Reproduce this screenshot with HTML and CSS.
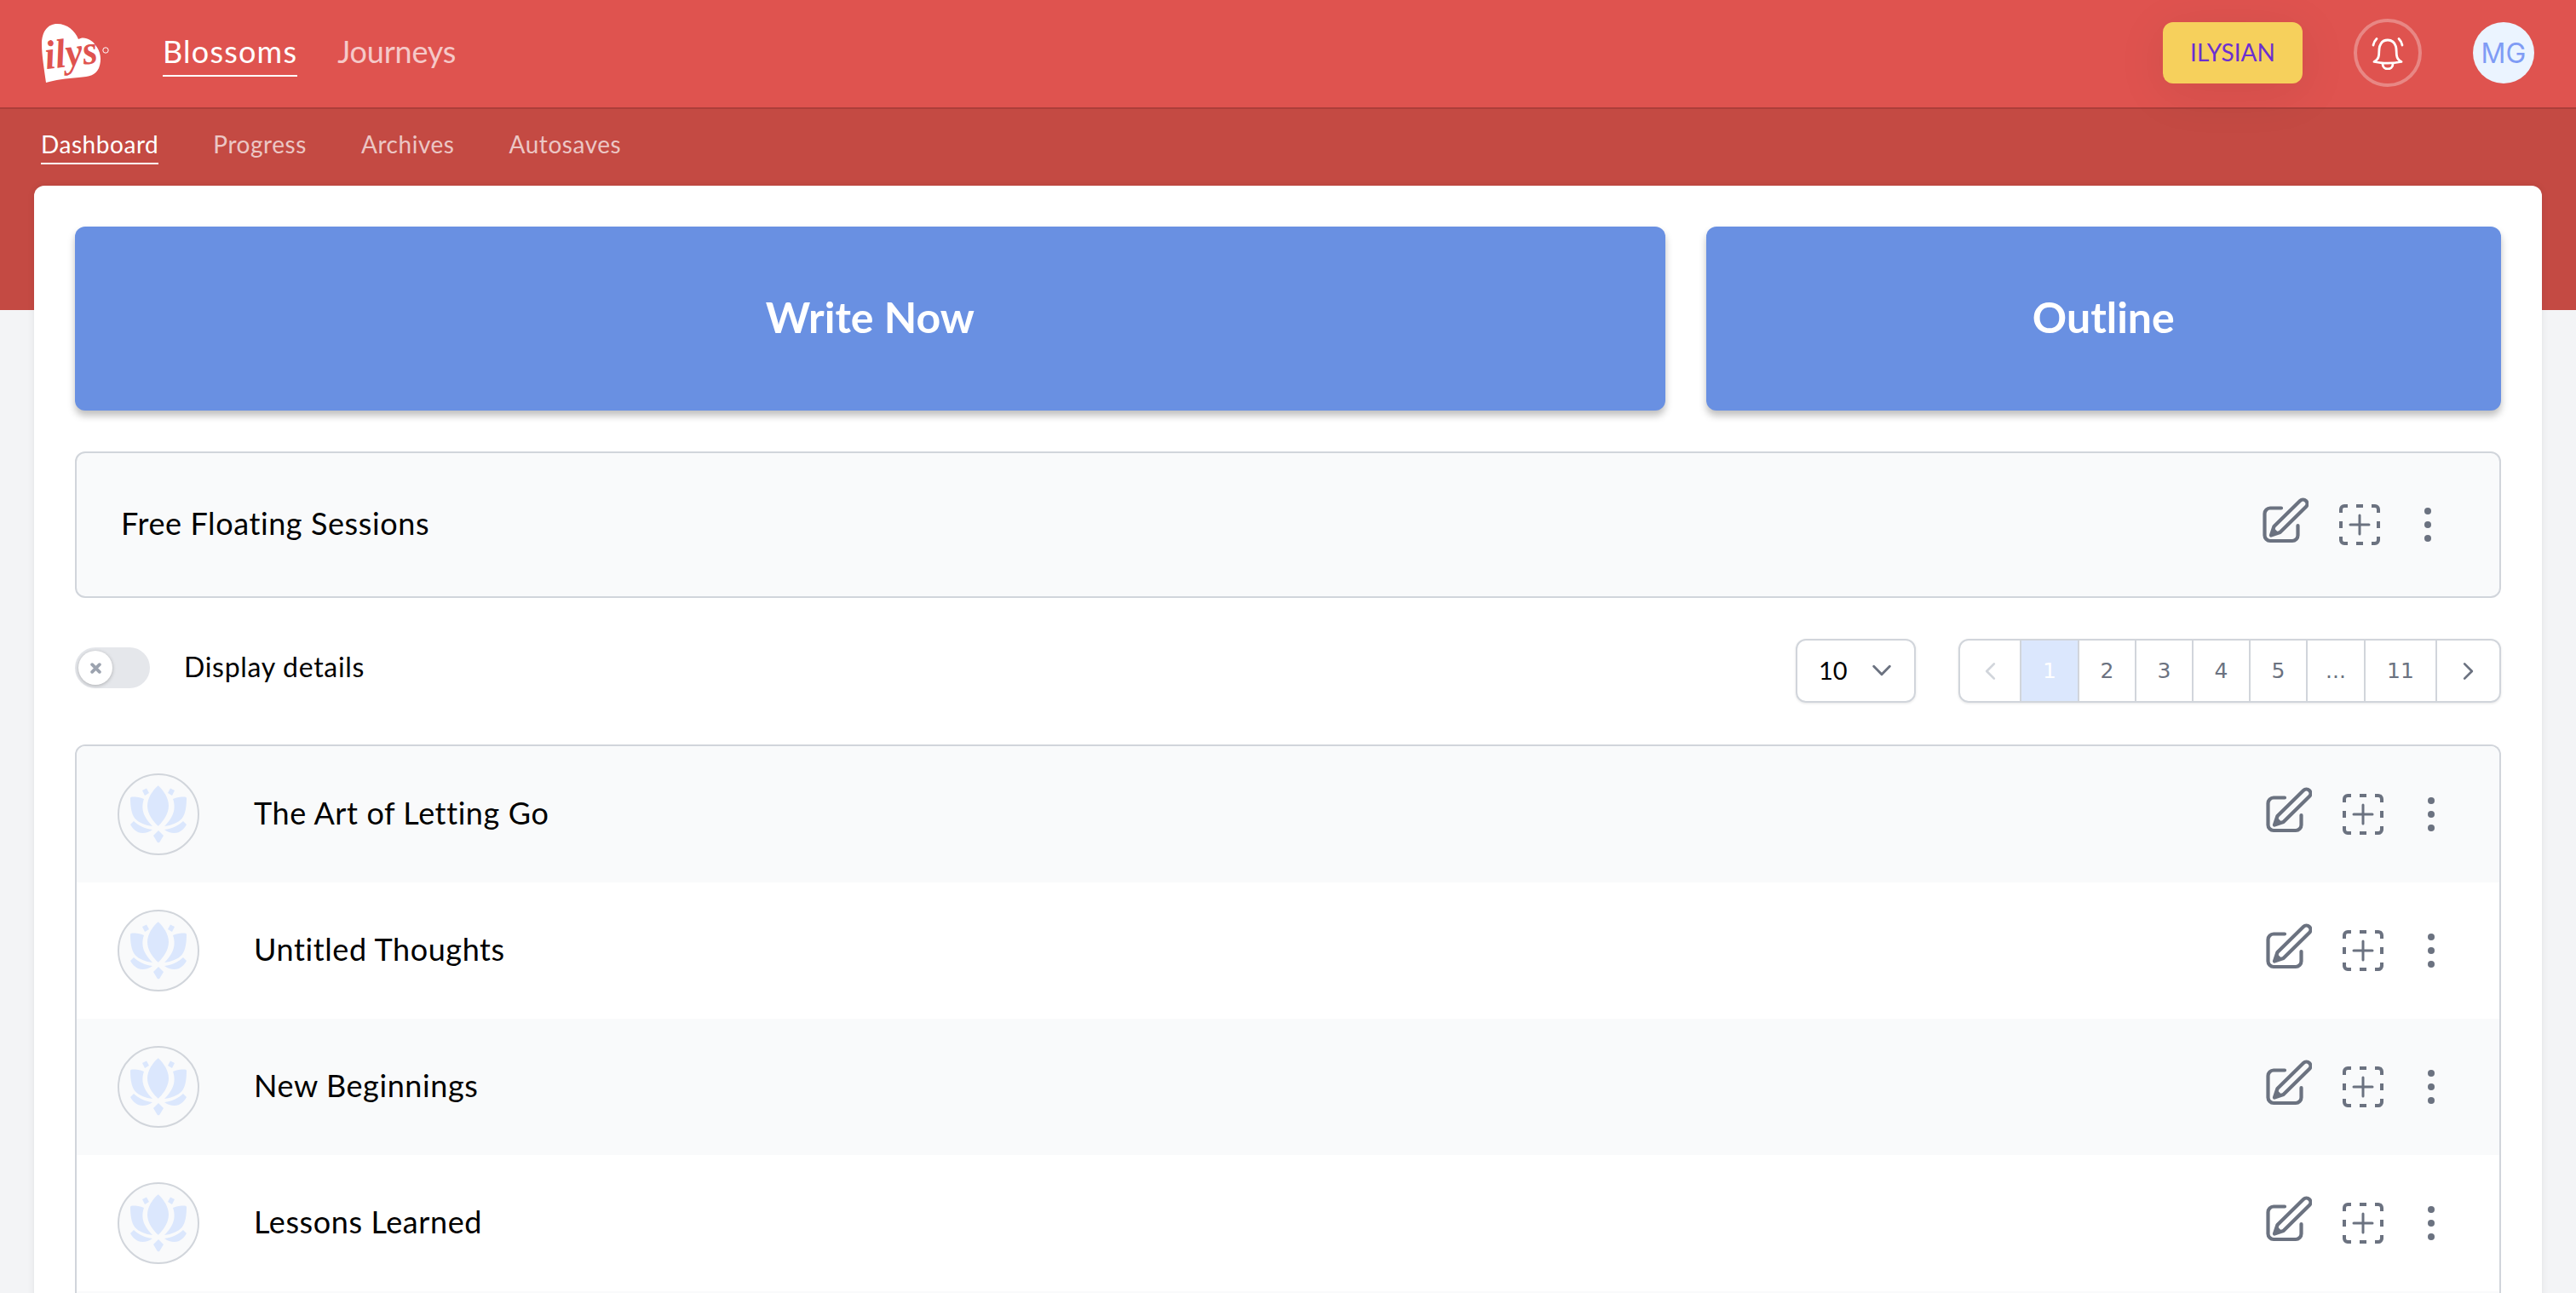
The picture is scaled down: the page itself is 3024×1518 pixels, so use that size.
FILE: index.html
```html
<!DOCTYPE html>
<html lang="en">
<head>
    <meta charset="UTF-8">
    <meta name="viewport" content="width=device-width, initial-scale=1.0">
    <title>Dashboard</title>
    <link rel="stylesheet" href="styles.css">
</head>
<body>
    <svg class="defs" width="0" height="0">
        <symbol id="i-edit" viewBox="0 0 54 56">
            <path d="M22 13.5H9A6.5 6.5 0 0 0 2.500 20V45.500A6.500 6.500 0 0 0 9 52H35A6.500 6.500 0 0 0 41.500 45.500V34" fill="none" stroke="currentColor" stroke-width="4.200" stroke-linecap="round"/>
            <path d="M10 45.500L13.500 35L44 5A4.900 4.900 0 0 1 51 12L20.500 42Z" fill="none" stroke="currentColor" stroke-width="4.200" stroke-linejoin="round"/>
            <path d="M10 45.500L13 36.500L19 42.500Z" fill="currentColor"/>
        </symbol>
        <symbol id="i-add" viewBox="0 0 48 48">
            <path d="M2 10V6A4 4 0 0 1 6 2H10M20 2H28M38 2H42A4 4 0 0 1 46 6V10M46 20V28M46 38V42A4 4 0 0 1 42 46H38M28 46H20M10 46H6A4 4 0 0 1 2 42V38M2 28V20" fill="none" stroke="currentColor" stroke-width="4" stroke-linecap="butt"/>
            <path d="M24 13V35M13 24H35" fill="none" stroke="currentColor" stroke-width="3" stroke-linecap="round"/>
        </symbol>
        <symbol id="i-dots" viewBox="0 0 8 40">
            <circle cx="4" cy="4" r="4" fill="currentColor"/>
            <circle cx="4" cy="20" r="4" fill="currentColor"/>
            <circle cx="4" cy="36" r="4" fill="currentColor"/>
        </symbol>
        <symbol id="i-lotus" viewBox="0 0 96 96">
            <path d="M47.700 14.300C54 20 60 29 60 38C60 47 54 56 47.700 61.700C41 56 35 47 35 38C35 29 41 20 47.700 14.300Z"/>
            <path d="M15 29Q15 27.500 17 27.500C22 27.500 27 28 31 30C28.500 37 29 44 32 50C34 54 37 58 41 62C33 61 25 58 20.500 53C16 47.500 15 38 15 29Z"/>
            <path d="M81 29Q81 27.500 79 27.500C74 27.500 69 28 65 30C67.500 37 67 44 64 50C62 54 59 58 55 62C63 61 71 58 75.500 53C80 47.500 81 38 81 29Z"/>
            <path d="M29 20L34 17.500L37 23L32 26Z"/>
            <path d="M67 20L62 17.500L59 23L64 26Z"/>
            <path d="M15 60L19 56C24 61 32 65 41 66C36 70 29 71 24 69C20 67 17 64 15 60Z"/>
            <path d="M81 60L77 56C72 61 64 65 55 66C60 70 67 71 72 69C76 67 79 64 81 60Z"/>
            <path d="M48 67L54 73L49.500 80.500A2 2 0 0 1 46.500 80.500L42 73Z"/>
        </symbol>
    </svg>

    <header class="topbar">
        <div class="topbar-left">
            <svg class="logo" viewBox="0 0 90 85" width="90" height="85">
                <path d="M14 77C12 62 9 45 9 32C9 17 16 8 27 8C39 8 48 16 52 26C58 22 68 26 72 33C78 40 80 50 76 60C72 68 66 70 52 71C38 72 24 74 14 77Z" fill="#fff"/>
                <text class="logo-text" x="13" y="58" textLength="62" lengthAdjust="spacingAndGlyphs" transform="rotate(-7 40 50)">ilys</text>
                <circle cx="84" cy="39" r="3.200" fill="none" stroke="#fff" stroke-width="1"/>
            </svg>
            <nav class="main-nav">
                <a href="#" class="active">Blossoms</a>
                <a href="#">Journeys</a>
            </nav>
        </div>
        <div class="topbar-right">
            <a href="#" class="badge">ILYSIAN</a>
            <button class="bell">
                <svg viewBox="0 0 40 40" width="40" height="40" fill="none" stroke="#fff" stroke-width="2.800" stroke-linecap="round" stroke-linejoin="round">
                    <path d="M4 30.500C7 29 9 27 9.500 23C10 20 9.500 16 10.500 12.500C12 7.500 16 5 20 5C24 5 28 7.500 29.500 12.500C30.500 16 30 20 30.500 23C31 27 33 29 36 30.500C26 32.500 14 32.500 4 30.500Z"/>
                    <path d="M14 33C14 41 26 41 26 33"/>
                    <path d="M3 11C3.500 8 5 5.500 7 3.500"/>
                    <path d="M37 11C36.500 8 35 5.500 33 3.500"/>
                </svg>
            </button>
            <div class="avatar">MG</div>
        </div>
    </header>

    <div class="subnav">
        <nav class="sub-links">
            <a href="#" class="active">Dashboard</a>
            <a href="#">Progress</a>
            <a href="#">Archives</a>
            <a href="#">Autosaves</a>
        </nav>
    </div>

    <main class="card">
        <div class="hero">
            <a href="#" class="hero-btn">Write Now</a>
            <a href="#" class="hero-btn">Outline</a>
        </div>

        <section class="floating">
            <span class="floating-title">Free Floating Sessions</span>
            <div class="actions">
                <svg class="ic-edit"><use href="#i-edit"/></svg>
                <svg class="ic-add"><use href="#i-add"/></svg>
                <svg class="ic-dots"><use href="#i-dots"/></svg>
            </div>
        </section>

        <div class="controls">
            <div class="toggle-wrap">
                <div class="toggle">
                    <span class="knob">
                        <svg viewBox="0 0 12 12" width="13" height="13"><path d="M2 2L10 10M10 2L2 10" stroke="#9ca3af" stroke-width="3.500" stroke-linecap="round"/></svg>
                    </span>
                </div>
                <span class="toggle-label">Display details</span>
            </div>
            <div class="paging">
                <div class="per-page">
                    <span>10</span>
                    <svg viewBox="0 0 20 12" width="24" height="14"><path d="M2 2L10 10L18 2" fill="none" stroke="#6b7280" stroke-width="2.500" stroke-linecap="round" stroke-linejoin="round"/></svg>
                </div>
                <div class="pages">
                    <a href="#" class="pg pg-prev">
                        <svg viewBox="0 0 12 20" width="13" height="22"><path d="M10 2L2 10L10 18" fill="none" stroke="#d1d5db" stroke-width="2.500" stroke-linecap="round" stroke-linejoin="round"/></svg>
                    </a>
                    <a href="#" class="pg pg-on">1</a>
                    <a href="#" class="pg">2</a>
                    <a href="#" class="pg">3</a>
                    <a href="#" class="pg">4</a>
                    <a href="#" class="pg">5</a>
                    <a href="#" class="pg pg-gap">...</a>
                    <a href="#" class="pg pg-last">11</a>
                    <a href="#" class="pg pg-next">
                        <svg viewBox="0 0 12 20" width="13" height="22"><path d="M2 2L10 10L2 18" fill="none" stroke="#6b7280" stroke-width="2.500" stroke-linecap="round" stroke-linejoin="round"/></svg>
                    </a>
                </div>
            </div>
        </div>

        <section class="list">
            <div class="row">
                <span class="lotus"><svg><use href="#i-lotus"/></svg></span>
                <span class="row-title">The Art of Letting Go</span>
                <div class="actions">
                    <svg class="ic-edit"><use href="#i-edit"/></svg>
                    <svg class="ic-add"><use href="#i-add"/></svg>
                    <svg class="ic-dots"><use href="#i-dots"/></svg>
                </div>
            </div>
            <div class="row">
                <span class="lotus"><svg><use href="#i-lotus"/></svg></span>
                <span class="row-title">Untitled Thoughts</span>
                <div class="actions">
                    <svg class="ic-edit"><use href="#i-edit"/></svg>
                    <svg class="ic-add"><use href="#i-add"/></svg>
                    <svg class="ic-dots"><use href="#i-dots"/></svg>
                </div>
            </div>
            <div class="row">
                <span class="lotus"><svg><use href="#i-lotus"/></svg></span>
                <span class="row-title">New Beginnings</span>
                <div class="actions">
                    <svg class="ic-edit"><use href="#i-edit"/></svg>
                    <svg class="ic-add"><use href="#i-add"/></svg>
                    <svg class="ic-dots"><use href="#i-dots"/></svg>
                </div>
            </div>
            <div class="row">
                <span class="lotus"><svg><use href="#i-lotus"/></svg></span>
                <span class="row-title">Lessons Learned</span>
                <div class="actions">
                    <svg class="ic-edit"><use href="#i-edit"/></svg>
                    <svg class="ic-add"><use href="#i-add"/></svg>
                    <svg class="ic-dots"><use href="#i-dots"/></svg>
                </div>
            </div>
            <div class="row"></div>
        </section>
    </main>
</body>
</html>
```

FILE: styles.css
```css
* {
    box-sizing: border-box;
}

html, body {
    margin: 0;
    height: 100vh;
    overflow: hidden;
}

body {
    background-color: #f3f4f6;
    font-family: "Lato", "Open Sans", sans-serif;
    color: #000;
}

a {
    text-decoration: none;
    color: inherit;
}

.defs {
    position: absolute;
}

/* top bar */
.topbar {
    display: flex;
    justify-content: space-between;
    align-items: center;
    height: 128px;
    padding: 0 49px 2px 40px;
    background-color: #df534f;
    border-bottom: 2px solid #ad3e3a;
}

.topbar-left {
    display: flex;
    align-items: center;
}

.logo {
    display: block;
    margin-right: 61px;
}

.logo-text {
    font-family: "Liberation Serif", serif;
    font-style: italic;
    font-weight: 700;
    font-size: 48px;
    fill: #df534f;
}

.main-nav {
    display: flex;
    gap: 47px;
    margin-top: 4px;
    font-size: 36px;
}

.main-nav a {
    padding-bottom: 6px;
    border-bottom: 2px solid transparent;
    color: rgba(255, 255, 255, 0.7);
    letter-spacing: -0.2px;
}

.main-nav a.active {
    color: #fff;
    border-bottom-color: #fff;
    letter-spacing: 1.2px;
}

.topbar-right {
    display: flex;
    align-items: center;
}

.badge {
    display: flex;
    align-items: center;
    justify-content: center;
    width: 164px;
    height: 72px;
    margin-right: 60px;
    padding-bottom: 3px;
    border-radius: 12px;
    background-color: #f6d05c;
    color: #6b2fd0;
    font-size: 28px;
    box-shadow: 0 10px 60px rgba(0, 0, 0, 0.08);
}

.bell {
    display: flex;
    align-items: center;
    justify-content: center;
    width: 80px;
    height: 80px;
    margin-right: 60px;
    padding: 0;
    border: 4px solid rgba(255, 255, 255, 0.3);
    border-radius: 50%;
    background: none;
}

.avatar {
    display: flex;
    align-items: center;
    justify-content: center;
    width: 72px;
    height: 72px;
    border-radius: 50%;
    background-color: #ebf4ff;
    color: #7f9cf5;
    font-family: "Inter", sans-serif;
    font-size: 32px;
}

/* sub nav */
.subnav {
    height: 236px;
    padding: 24px 48px 0;
    background-color: #c44a43;
}

.sub-links {
    display: flex;
    gap: 64px;
    font-size: 28px;
    letter-spacing: 0.55px;
}

.sub-links a {
    padding-bottom: 5px;
    border-bottom: 2px solid transparent;
    color: rgba(255, 255, 255, 0.7);
}

.sub-links a.active {
    color: #fff;
    border-bottom-color: #fff;
}

/* main card */
.card {
    margin: -146px 40px 0;
    padding: 48px;
    background-color: #fff;
    border-radius: 12px 12px 0 0;
    box-shadow: 0 0 8px rgba(0, 0, 0, 0.08);
}

.hero {
    display: grid;
    grid-template-columns: 2fr 1fr;
    gap: 48px;
}

.hero-btn {
    display: flex;
    align-items: center;
    justify-content: center;
    height: 216px;
    padding-bottom: 4px;
    border-radius: 12px;
    background-color: #6990e2;
    color: #fff;
    font-size: 50px;
    font-weight: 700;
    box-shadow: 0 6px 8px rgba(0, 0, 0, 0.25);
}

.floating {
    display: flex;
    justify-content: space-between;
    align-items: center;
    height: 172px;
    margin-top: 48px;
    padding: 0 80px 0 52px;
    border: 2px solid #d1d5db;
    border-radius: 12px;
    background-color: #f9fafb;
}

.floating-title,
.row-title {
    padding-bottom: 4px;
    font-size: 36px;
    letter-spacing: 0.6px;
}

.actions {
    display: flex;
    align-items: center;
    color: #6b7280;
}

.ic-edit {
    width: 54px;
    height: 56px;
    margin-right: 36px;
    margin-bottom: 11px;
}

.ic-add {
    width: 48px;
    height: 48px;
    margin-right: 52px;
}

.ic-dots {
    width: 8px;
    height: 40px;
}

/* toggle and pagination */
.controls {
    display: flex;
    justify-content: space-between;
    align-items: flex-start;
    margin-top: 48px;
}

.toggle-wrap {
    display: flex;
    align-items: center;
    margin-top: 10px;
}

.toggle {
    display: flex;
    align-items: center;
    width: 88px;
    height: 48px;
    padding-left: 4px;
    margin-right: 40px;
    border-radius: 24px;
    background-color: #e5e7eb;
}

.knob {
    display: flex;
    align-items: center;
    justify-content: center;
    width: 40px;
    height: 40px;
    border-radius: 50%;
    background-color: #fff;
    box-shadow: 0 1px 4px rgba(0, 0, 0, 0.25);
}

.toggle-label {
    padding-bottom: 4px;
    font-size: 32px;
    letter-spacing: 0.7px;
}

.paging {
    display: flex;
    gap: 50px;
}

.per-page {
    display: flex;
    align-items: center;
    justify-content: space-between;
    width: 141px;
    height: 75px;
    padding: 0 26px 2px 25px;
    border: 2px solid #d1d5db;
    border-radius: 12px;
    font-size: 29px;
    box-shadow: 0 1px 3px rgba(0, 0, 0, 0.1);
}

.pages {
    display: flex;
    height: 75px;
    border: 2px solid #d1d5db;
    border-radius: 12px;
    box-shadow: 0 1px 3px rgba(0, 0, 0, 0.1);
    font-family: "DejaVu Sans", sans-serif;
    font-size: 25px;
    color: #6b7280;
}

.pg {
    display: flex;
    align-items: center;
    justify-content: center;
    width: 67px;
    border-right: 2px solid #d1d5db;
}

.pg-prev {
    width: 70px;
    border-right: 0;
}

.pg-on {
    width: 70px;
    border-left: 2px solid #d1d5db;
    background-color: #dbe7fd;
    color: #fff;
}

.pg-gap {
    width: 68px;
}

.pg-last {
    width: 84px;
}

.pg-next {
    width: 73px;
    border-right: 0;
}

/* list of blossoms */
.list {
    margin-top: 49px;
    border: 2px solid #d1d5db;
    border-bottom: 0;
    border-radius: 12px 12px 0 0;
    overflow: hidden;
}

.row {
    display: flex;
    align-items: center;
    height: 160px;
    padding: 0 76px 0 48px;
}

.row:nth-child(odd) {
    background-color: #f9fafb;
}

.lotus {
    display: block;
    flex: none;
    width: 96px;
    height: 96px;
    margin-right: 64px;
    border: 2px solid #d1d5db;
    border-radius: 50%;
    background-color: #f9fafb;
}

.lotus svg {
    display: block;
    width: 96px;
    height: 96px;
    margin: -2px;
    fill: #dbe7fd;
}

.row-title {
    flex: 1;
}
```
